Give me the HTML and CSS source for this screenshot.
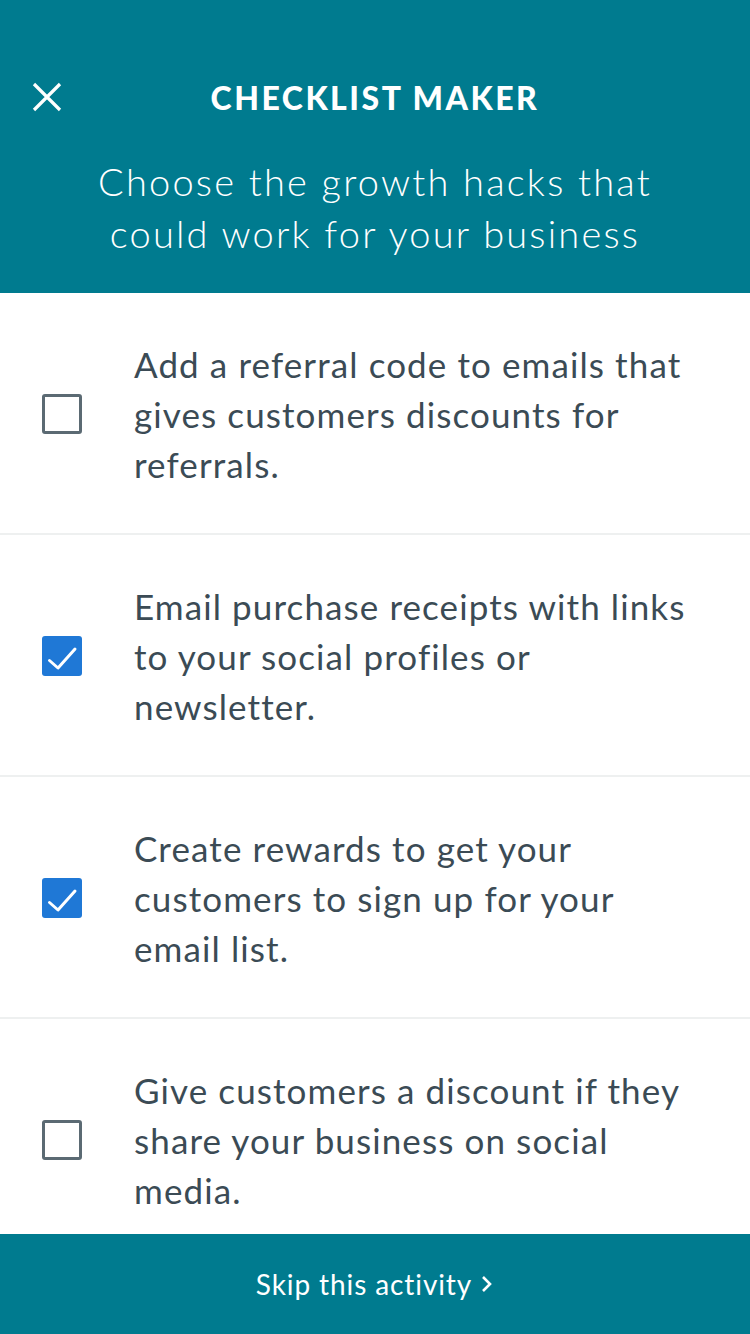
FILE: index.html
```html
<!DOCTYPE html>
<html lang="en">
<head>
    <meta charset="UTF-8">
    <meta name="viewport" content="width=device-width, initial-scale=1.0">
    <title>Checklist Maker</title>
    <link rel="stylesheet" href="styles.css">
</head>
<body>
    <div class="page">
        <div class="header">
            <div class="topbar">
                <svg class="close" width="30" height="30" viewBox="0 0 30 30">
                    <path d="M2 2 L28 28 M28 2 L2 28" stroke="#fff" stroke-width="3.2" fill="none"/>
                </svg>
                <h1>CHECKLIST MAKER</h1>
            </div>
            <p class="subtitle">Choose the growth hacks that<br>could work for your business</p>
        </div>

        <ul class="list">
            <li class="item">
                <span class="box"></span>
                <span class="text">Add a referral code to emails that<br>gives customers discounts for<br>referrals.</span>
            </li>
            <li class="item">
                <span class="box checked">
                    <svg width="40" height="40" viewBox="0 0 40 40"><path d="M7.5 24.5 L16 32 L33 13" stroke="#fff" stroke-width="3" fill="none" stroke-linecap="round" stroke-linejoin="round"/></svg>
                </span>
                <span class="text">Email purchase receipts with links<br>to your social profiles or<br>newsletter.</span>
            </li>
            <li class="item">
                <span class="box checked">
                    <svg width="40" height="40" viewBox="0 0 40 40"><path d="M7.5 24.5 L16 32 L33 13" stroke="#fff" stroke-width="3" fill="none" stroke-linecap="round" stroke-linejoin="round"/></svg>
                </span>
                <span class="text">Create rewards to get your<br>customers to sign up for your<br>email list.</span>
            </li>
            <li class="item">
                <span class="box"></span>
                <span class="text">Give customers a discount if they<br>share your business on social<br>media.</span>
            </li>
        </ul>

        <div class="footer">
            <span>Skip this activity</span>
            <svg width="14" height="20" viewBox="0 0 14 20"><path d="M3 3 L10 10 L3 17" stroke="#fff" stroke-width="2.6" fill="none"/></svg>
        </div>
    </div>
</body>
</html>
```

FILE: styles.css
```css
body {
    margin: 0;
    font-family: Lato, "Open Sans", sans-serif;
    background-color: #fff;
}

.page {
    display: flex;
    flex-direction: column;
    height: 100vh;
    overflow: hidden;
}

.header {
    background-color: #007b8f;
    color: #fff;
    height: 293px;
    box-sizing: border-box;
    padding-top: 74px;
    flex-shrink: 0;
}

.topbar {
    display: flex;
    align-items: center;
    justify-content: center;
    position: relative;
    height: 46px;
}

.close {
    position: absolute;
    left: 32px;
    top: 8px;
}

h1 {
    margin: 0;
    font-size: 32px;
    font-weight: 900;
    letter-spacing: 2.5px;
}

.subtitle {
    margin: 35px 0 0;
    text-align: center;
    font-size: 38px;
    line-height: 52px;
    font-weight: 300;
    letter-spacing: 2.2px;
}

.list {
    list-style: none;
    margin: 0;
    padding: 0;
    flex: 1;
    overflow: hidden;
}

.item {
    display: flex;
    align-items: center;
    padding: 46px 20px 44px 42px;
    border-bottom: 2px solid #eef0f0;
}

.box {
    width: 40px;
    height: 40px;
    box-sizing: border-box;
    border: 3px solid #5b6a73;
    border-radius: 3px;
    flex-shrink: 0;
    margin-right: 52px;
}

.box.checked {
    border: none;
    background-color: #1f78d6;
}

.box svg {
    display: block;
}

.text {
    font-size: 35px;
    line-height: 50px;
    color: #3b4b55;
    letter-spacing: 1.1px;
    white-space: nowrap;
}

.footer {
    background-color: #007b8f;
    color: #fff;
    height: 100px;
    flex-shrink: 0;
    display: flex;
    align-items: center;
    justify-content: center;
    gap: 8px;
    font-size: 28px;
    letter-spacing: 0.9px;
}
```
